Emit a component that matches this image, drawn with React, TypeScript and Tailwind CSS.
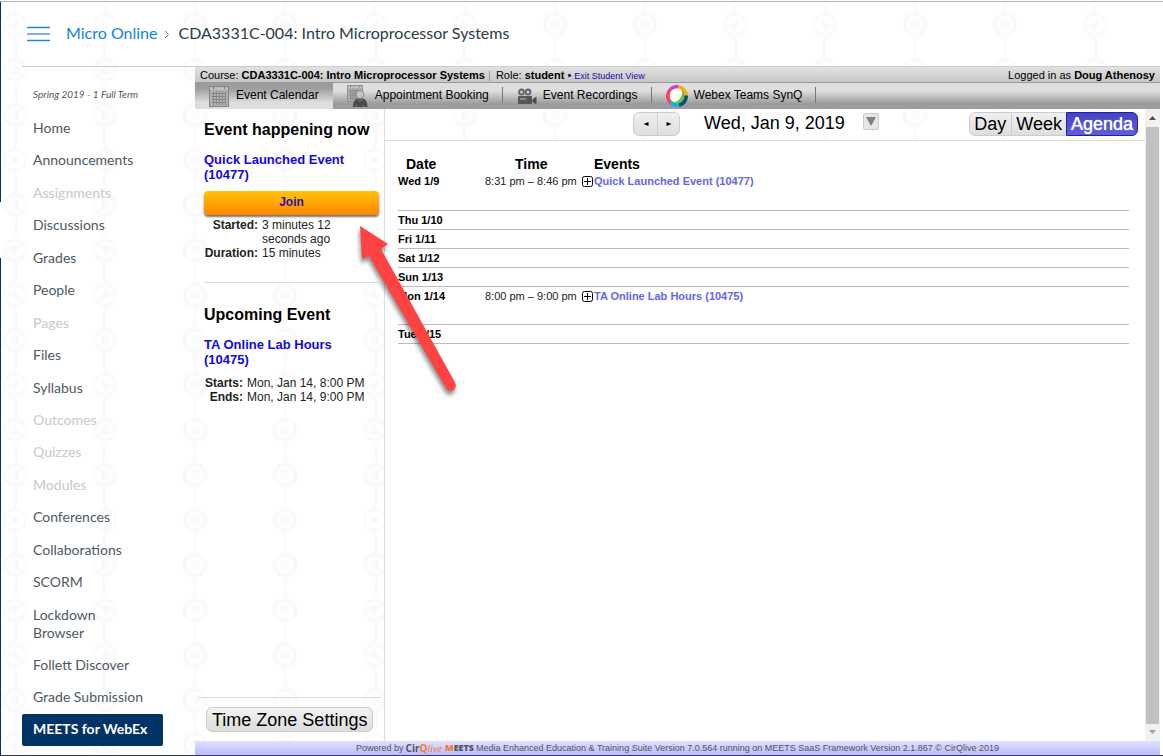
import React from "react";

type NavItem = { label: string; muted?: boolean; active?: boolean };

const navItems: NavItem[] = [
  { label: "Home" },
  { label: "Announcements" },
  { label: "Assignments", muted: true },
  { label: "Discussions" },
  { label: "Grades" },
  { label: "People" },
  { label: "Pages", muted: true },
  { label: "Files" },
  { label: "Syllabus" },
  { label: "Outcomes", muted: true },
  { label: "Quizzes", muted: true },
  { label: "Modules", muted: true },
  { label: "Conferences" },
  { label: "Collaborations" },
  { label: "SCORM" },
  { label: "Lockdown Browser" },
  { label: "Follett Discover" },
  { label: "Grade Submission" },
  { label: "MEETS for WebEx", active: true },
];

type AgendaRow = { date: string; time?: string; event?: string };

const agenda: AgendaRow[] = [
  { date: "Wed 1/9", time: "8:31 pm – 8:46 pm", event: "Quick Launched Event (10477)" },
  { date: "Thu 1/10" },
  { date: "Fri 1/11" },
  { date: "Sat 1/12" },
  { date: "Sun 1/13" },
  { date: "Mon 1/14", time: "8:00 pm – 9:00 pm", event: "TA Online Lab Hours (10475)" },
  { date: "Tue 1/15" },
];

function Backdrop() {
  return (
    <svg className="pointer-events-none absolute inset-0 -z-10 h-full w-full" aria-hidden="true">
      <defs>
        <pattern id="beads" width="90" height="45" patternUnits="userSpaceOnUse" x="-30" y="2">
          <path d="M45 0v12M45 34v11" stroke="#fbfbfb" strokeWidth="4" />
          <circle cx="45" cy="23" r="10.5" fill="none" stroke="#fbfbfb" strokeWidth="4" />
          <circle cx="45" cy="23" r="5" fill="#fbfbfb" />
        </pattern>
      </defs>
      <rect width="100%" height="100%" fill="url(#beads)" />
    </svg>
  );
}

function CalendarGrid({ s = 1 }: { s?: number }) {
  return (
    <g transform={`scale(${s})`}>
      <rect x="0.5" y="0.5" width="19" height="20" fill="#b0b0b0" stroke="#858585" />
      <path d="M1 2.5h18" stroke="#c4c4c4" strokeWidth="2" />
      <path d="M4.500 1v2M15.500 1v2" stroke="#777" />
      <path d="M3 7.500h14M3 10.500h14M3 13.500h14M3 16.500h14" stroke="#808080" />
      <path d="M4.500 5v14M7.500 5v14M10.500 5v14M13.500 5v14M16.500 5v14" stroke="#8c8c8c" />
    </g>
  );
}

function CalendarIcon() {
  return (
    <svg width="20" height="21" viewBox="0 0 20 21" aria-hidden="true">
      <CalendarGrid />
    </svg>
  );
}

function BookingIcon() {
  return (
    <svg width="22" height="22" viewBox="0 0 22 22" aria-hidden="true">
      <CalendarGrid s={0.8} />
      <path d="M6 22c0-5 2-8.500 5-8.500h4.500c3 0 5 3.500 5 8.500h-3l-1-3v3h-7v-3l-1 3z" fill="#4b4b4b" />
      <circle cx="13" cy="9.500" r="4" fill="#c4c4c4" stroke="#8c8c8c" />
      <path d="M10.500 14.500l2.500 2 2.500-2" fill="#555" stroke="#777" />
    </svg>
  );
}

function CameraIcon() {
  return (
    <svg width="20" height="17" viewBox="0 0 20 17" aria-hidden="true">
      <circle cx="4.500" cy="4" r="2.500" fill="#c8c8c8" stroke="#666" strokeWidth="1.800" />
      <circle cx="11" cy="4" r="2.500" fill="#c8c8c8" stroke="#666" strokeWidth="1.800" />
      <rect x="1" y="8" width="14" height="8" rx="1" fill="#555" />
      <rect x="3" y="10" width="6" height="2" fill="#8b8b8b" />
      <path d="M15.500 11.500L19.500 8.500v8l-4-2.500z" fill="#4a4a4a" />
    </svg>
  );
}

function TeamsIcon() {
  return (
    <svg width="22" height="22" viewBox="0 0 22 22" aria-hidden="true">
      <g fill="none" strokeWidth="4">
        <path d="M4.500 4.700A9 9 0 0 1 12.500 2.100" stroke="#d03ad8" />
        <path d="M12 2A9 9 0 0 1 20 11" stroke="#fda50f" />
        <path d="M20 10.500A9 9 0 0 1 12.500 19.900" stroke="#005073" />
        <path d="M13 19.800A9 9 0 0 1 4.500 17.200" stroke="#00bceb" />
        <path d="M4.800 17.500A9 9 0 0 1 4.600 4.600" stroke="#ff3d67" />
      </g>
      <circle cx="11" cy="11" r="7.500" fill="#6cc04a" />
      <path d="M4 8.500C5 5 8 3.500 11 3.500c4 0 5.500 2 5 5.500-1 5-5 8.500-8.500 7.800C4.300 16 3.200 11.500 4 8.500z" fill="#fff" />
    </svg>
  );
}

function PlusBox() {
  return (
    <svg width="11" height="11" viewBox="0 0 11 11" fill="none" stroke="#000" aria-hidden="true">
      <rect x="0.5" y="0.5" width="10" height="10" rx="2" />
      <path d="M2 5.500h7M5.500 2v7" />
    </svg>
  );
}

function Header() {
  return (
    <header className="ml-[22px] mr-[3px] flex h-[65px] items-center border-b border-[#c7cdd1] pb-[2px] pl-[5px] font-['Lato',sans-serif] text-base">
      <button type="button" aria-label="Course navigation menu" className="mt-px mr-4">
        <svg width="23" height="16" viewBox="0 0 23 16" strokeWidth="1.500" aria-hidden="true">
          <path d="M0.500 1.500h22M0.500 14.500h22" stroke="#1b86dc" strokeLinecap="round" />
          <path d="M0.500 8h22" stroke="#84aeea" strokeWidth="2" strokeLinecap="round" />
        </svg>
      </button>
      <nav aria-label="Breadcrumb" className="flex items-center">
        <a href="#course" className="text-[#1283de]">Micro Online</a>
        <svg width="6" height="9" viewBox="0 0 6 9" className="mt-[3px] mr-2 ml-[7px]" fill="none" stroke="#73818c" aria-hidden="true">
          <path d="M1 1l3.500 3.500L1 8" />
        </svg>
        <span className="text-[#2d3b45]">CDA3331C-004: Intro Microprocessor Systems</span>
      </nav>
    </header>
  );
}

function Sidebar() {
  return (
    <nav
      aria-label="Course"
      className="ml-[22px] flex w-[173px] shrink-0 flex-col pb-[9px] font-['Lato',sans-serif] text-sm text-[#4c5963]"
    >
      <p className="mt-[19px] mb-[10px] pl-[11px] text-[10px] leading-4 italic">Spring 2019 - 1 Full Term</p>
      <ul className="flex w-[141px] flex-1 flex-col justify-between">
        {navItems.map((item) => (
          <li key={item.label}>
            <a
              href={"#" + item.label.toLowerCase().split(" ").join("-")}
              aria-current={item.active ? "page" : undefined}
              className={
                item.active
                  ? "block rounded-xs bg-[#003366] px-[11px] pt-[6px] pb-2 leading-[18px] font-bold whitespace-nowrap text-white"
                  : item.muted
                    ? "block px-[11px] py-[7px] leading-[18px] font-medium text-[#c9cccf]"
                    : "block px-[11px] py-[7px] pr-8 leading-[18px]"
              }
            >
              {item.label === "Lockdown Browser" ? item.label : <span className="whitespace-nowrap">{item.label}</span>}
            </a>
          </li>
        ))}
      </ul>
    </nav>
  );
}

const tabs = [
  { label: "Event Calendar", icon: <CalendarIcon /> },
  { label: "Appointment Booking", icon: <BookingIcon /> },
  { label: "Event Recordings", icon: <CameraIcon /> },
  { label: "Webex Teams SynQ", icon: <TeamsIcon /> },
];

function TopBars() {
  return (
    <>
      <div className="flex h-4 items-center justify-between border-b border-[#999] bg-gradient-to-b from-[#e2e2e2] to-[#c6c6c6] px-[5px] pt-[2px] text-[11px] leading-[13px] whitespace-nowrap">
        <div className="flex items-center">
          <span>Course: <b>CDA3331C-004: Intro Microprocessor Systems</b></span>
          <span className="mr-[6px] ml-1 h-[10px] w-px bg-[#999]" />
          <span>
            Role: <b>student</b> • <a href="#exit" className="text-[9px] text-[#1a0dab]">Exit Student View</a>
          </span>
        </div>
        <span>Logged in as <b>Doug Athenosy</b></span>
      </div>
      <nav
        aria-label="Tools"
        className="flex h-[26px] items-stretch bg-gradient-to-b from-[#dedede] from-30% to-[#9c9c9c] to-80% text-[12px]"
      >
        {tabs.map((tab, i) => (
          <a
            key={tab.label}
            href={"#tab" + i}
            className={
              i === 0
                ? "flex items-center gap-[7px] bg-gradient-to-b from-[#9c9c9c] from-20% to-[#dedede] to-75% pr-[14px] pl-[14px]"
                : "flex items-center gap-[6px]"
            }
          >
            <span className={i === 0 ? "" : "pl-[14px]"}>{tab.icon}</span>
            <span className="pb-[2px]">{tab.label}</span>
            {i > 0 && <span className="mb-[2px] ml-[7px] h-4 w-px bg-[#777]" />}
          </a>
        ))}
      </nav>
    </>
  );
}

function EventPanel() {
  return (
    <aside className="flex w-[190px] shrink-0 flex-col border-r border-[#ddd] pr-[5px] pl-[9px]">
      <section className="border-b border-[#ddd] pb-[22px]">
        <h2 className="pt-[11px] text-base leading-5 font-bold">Event happening now</h2>
        <a href="#event-10477" className="mt-3 block w-[160px] text-[13px] leading-[15px] font-bold text-[#1408dd]">
          Quick Launched Event (10477)
        </a>
        <button
          type="button"
          className="mt-[9px] h-6 w-full rounded-sm bg-gradient-to-b from-[#ffc40c] to-[#ff8400] pb-[2px] text-[12px] font-bold text-[#2a12a8] shadow-[0_2px_2px_#777]"
        >
          Join
        </button>
        <dl className="mt-[3px] grid w-[150px] grid-cols-[54px_1fr] gap-x-1 text-[12px] leading-[14px] text-[#222]">
          <dt className="text-right font-bold">Started:</dt>
          <dd>3 minutes 12 seconds ago</dd>
          <dt className="text-right font-bold">Duration:</dt>
          <dd>15 minutes</dd>
        </dl>
      </section>
      <section>
        <h2 className="pt-[22px] text-base leading-5 font-bold">Upcoming Event</h2>
        <a href="#event-10475" className="mt-3 block w-[160px] text-[13px] leading-[15px] font-bold text-[#1408dd]">
          TA Online Lab Hours (10475)
        </a>
        <dl className="mt-[9px] grid grid-cols-[39px_1fr] gap-x-1 text-[12px] leading-[14px] whitespace-nowrap text-[#222]">
          <dt className="text-right font-bold">Starts:</dt>
          <dd>Mon, Jan 14, 8:00 PM</dd>
          <dt className="text-right font-bold">Ends:</dt>
          <dd>Mon, Jan 14, 9:00 PM</dd>
        </dl>
      </section>
      <div className="mt-auto -mr-[2px] -ml-[6px] border-t border-[#ddd] pt-[9px] pb-2 pl-2">
        <button
          type="button"
          className="h-[25px] rounded-md border border-[#ccc] bg-gradient-to-b from-[#f2f2f2] to-[#dcdcdc] px-[5px] text-lg leading-6 whitespace-nowrap"
        >
          Time Zone Settings
        </button>
      </div>
    </aside>
  );
}

function AgendaToolbar() {
  return (
    <div className="flex h-8 items-start border-b border-[#ddd] pt-[3px] pr-[7px] pl-[248px]">
      <div className="flex h-6 overflow-hidden rounded-md border border-[#ccc] bg-gradient-to-b from-[#f0f0f0] to-[#dedede]">
        <button type="button" aria-label="Previous" className="flex w-6 items-center justify-center border-r border-[#ccc]">
          <svg width="6" height="4" viewBox="0 0 5 4" aria-hidden="true"><path d="M5 0v4L0 2z" /></svg>
        </button>
        <button type="button" aria-label="Next" className="flex w-[21px] items-center justify-center">
          <svg width="6" height="4" viewBox="0 0 5 4" aria-hidden="true"><path d="M0 0v4l5-2z" /></svg>
        </button>
      </div>
      <h1 className="ml-6 text-lg leading-[22px] whitespace-nowrap">Wed, Jan 9, 2019</h1>
      <button
        type="button"
        aria-label="Pick a date"
        className="mt-px ml-[18px] flex h-[17px] w-4 items-center justify-center rounded-xs border border-[#ccc] bg-[#e6e6e6]"
      >
        <svg width="10" height="9" viewBox="0 0 10 9" className="mb-px" aria-hidden="true"><path d="M0 0h10L5 9z" fill="#808080" /></svg>
      </button>
      <div className="ml-auto flex h-6 text-lg leading-5">
        <button type="button" className="rounded-l-md border border-[#ccc] bg-gradient-to-b from-[#f0f0f0] to-[#dedede] pr-[5px] pl-1">Day</button>
        <button type="button" className="border-y border-[#ccc] bg-gradient-to-b from-[#f0f0f0] to-[#dedede] px-1">Week</button>
        <button
          type="button"
          aria-pressed="true"
          className="rounded-r-md border border-[#2420a0] bg-gradient-to-b from-[#4543c4] to-[#5f5de0] px-1 text-white [text-shadow:0_0_1px_#fff]"
        >
          Agenda
        </button>
      </div>
    </div>
  );
}

function AgendaTable() {
  return (
    <div className="pt-4 pr-4 pl-[13px]">
      <table className="w-full table-fixed border-collapse text-left text-[11px]">
        <thead>
          <tr className="h-[15px] text-[14px] leading-[15px]">
            <th className="w-[87px] pl-2">Date</th>
            <th className="w-[97px] pl-[30px]">Time</th>
            <th className="pl-3">Events</th>
          </tr>
        </thead>
        <tbody>
          {agenda.map((row) => (
            <tr key={row.date} className={row.event ? "h-[38px] border-b border-[#bbb] align-top" : "h-[19px] border-b border-[#bbb] align-top"}>
              <th scope="row" className="pt-[3px] leading-[13px]">{row.date}</th>
              <td className="pt-[3px] leading-[13px] whitespace-nowrap text-[#222]">{row.time}</td>
              <td className="pt-[3px] leading-[13px]">
                {row.event && (
                  <a href="#event" className="flex items-center gap-px font-bold text-[#6663f2]">
                    <PlusBox />
                    {row.event}
                  </a>
                )}
              </td>
            </tr>
          ))}
        </tbody>
      </table>
    </div>
  );
}

function ScrollTrack() {
  return (
    <div aria-hidden="true" className="flex w-[15px] shrink-0 flex-col items-center bg-[#f1f1f1]">
      <svg width="7" height="4" viewBox="0 0 7 4" className="mt-[7px] mb-[7px]"><path d="M3.500 0L7 4H0z" fill="#505050" /></svg>
      <div className="w-[13px] flex-1 bg-[#c1c1c1]" />
      <svg width="7" height="4" viewBox="0 0 7 4" className="mt-[6px] mb-[7px]"><path d="M0 0h7L3.500 4z" fill="#a0a0a0" /></svg>
    </div>
  );
}

function PointerArrow() {
  return (
    <svg
      width="110"
      height="180"
      viewBox="0 0 110 180"
      aria-hidden="true"
      className="pointer-events-none absolute top-[112px] left-[161px]"
    >
      <g className="drop-shadow-[-1px_4px_2px_rgba(0,0,0,0.45)]">
        <path
          d="M4 5L32 23 25 28 99 161.500C102.500 168 94 173.500 90 167L13 35 6 38z"
          fill="#ff4242"
        />
      </g>
    </svg>
  );
}

function Footer() {
  return (
    <footer className="flex h-[14px] items-center justify-center gap-[2px] bg-gradient-to-b from-[#e0e0ff] to-[#bbbbff] text-[9px] leading-[14px] whitespace-nowrap text-[#555]">
      <span>Powered by</span>
      <span className="font-['Open_Sans',sans-serif] text-[10px] font-bold">
        Cir<span className="text-[#f47a2a]">Q</span>
        <span className="font-['Liberation_Serif',serif] font-normal text-[#f47a2a] italic">live</span>
      </span>
      <span className="ml-px font-['Open_Sans',sans-serif] font-extrabold">
        <span className="text-[#f47a2a]">M</span>EETS
      </span>
      <span>Media Enhanced Education &amp; Training Suite Version 7.0.564 running on MEETS SaaS Framework Version 2.1.867 © CirQlive 2019</span>
    </footer>
  );
}

export default function App() {
  return (
    <div className="relative isolate flex min-h-screen flex-col overflow-hidden border-b border-[#33384a] bg-white font-['Liberation_Sans',Arial,sans-serif] text-black">
      <Backdrop />
      <div className="absolute top-[2px] bottom-0 left-0 flex w-px flex-col" aria-hidden="true">
        <div className="h-[200px] bg-[#003366]" />
        <div className="mt-14 flex-1 bg-[#003366]" />
      </div>
      <div className="mt-px h-px bg-[#b0b5b5]" />
      <Header />
      <div className="flex flex-1">
        <Sidebar />
        <main className="mr-[3px] flex min-w-0 flex-1 flex-col">
          <TopBars />
          <div className="relative flex flex-1">
            <EventPanel />
            <div className="flex min-w-0 flex-1 flex-col">
              <AgendaToolbar />
              <div className="flex-1 bg-white">
                <AgendaTable />
              </div>
            </div>
            <ScrollTrack />
            <PointerArrow />
          </div>
          <Footer />
        </main>
      </div>
    </div>
  );
}
